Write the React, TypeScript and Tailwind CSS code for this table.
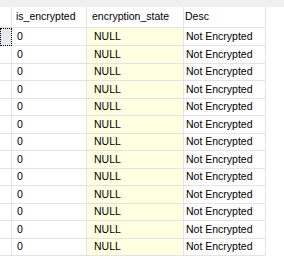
// Results grid - SSMS style
const rows = Array.from({ length: 13 }, () => ({
  isEncrypted: '0',
  state: 'NULL',
  desc: 'Not Encrypted',
}));

export default function App() {
  return (
    <div
      className="w-[284px] h-[278px] bg-white text-[10.5px] text-black overflow-hidden"
      style={{ fontFamily: '"Liberation Sans", Arial, sans-serif' }}
    >
      {/* top strip */}
      <div className="h-[7px] bg-[#f0f0f0]" />

      {/* header */}
      <div className="flex h-[21px]">
        <div className="w-[12px] border-r border-b border-[#e3e3e3]" />
        <div className="w-[75px] flex items-center pl-[4px] border-r border-b border-[#e3e3e3]">
          is_encrypted
        </div>
        <div className="w-[97px] flex items-center pl-[5px] border-r border-b border-[#e3e3e3]">
          encryption_state
        </div>
        <div className="w-[82px] flex items-center pl-[1px] border-r border-b border-[#e3e3e3]">
          Desc
        </div>
      </div>

      {/* rows */}
      {rows.map((r, i) => (
        <div
          key={i}
          className={i === 0 || i % 2 === 1 ? 'flex h-[18px]' : 'flex h-[17px]'}
        >
          {i === 0 ? (
            <div className="w-[12px] bg-[#e6eaef] border border-dotted border-black" />
          ) : (
            <div className="w-[12px] border-r border-b border-[#e3e3e3]" />
          )}
          <div className="w-[75px] flex items-center pl-[5px] border-r border-b border-[#e3e3e3]">
            {r.isEncrypted}
          </div>
          <div className="w-[97px] flex items-center pl-[7px] bg-[#ffffe1] border-r border-b border-[#e3e3e3]">
            {r.state}
          </div>
          <div className="w-[82px] flex items-center pl-[2px] border-r border-b border-[#e3e3e3]">
            {r.desc}
          </div>
        </div>
      ))}
    </div>
  );
}
